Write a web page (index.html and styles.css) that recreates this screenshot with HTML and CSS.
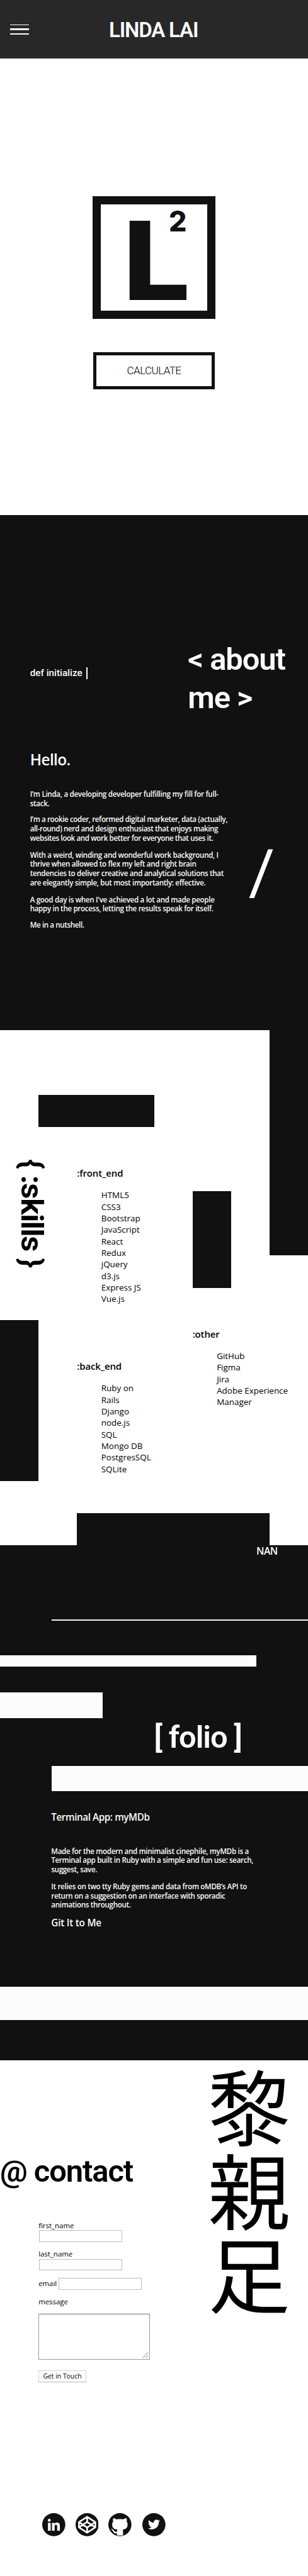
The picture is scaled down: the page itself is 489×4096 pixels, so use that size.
FILE: index.html
```
<!DOCTYPE html>
<html lang="en">
<head>
<meta charset="utf-8">
<title>Linda Lai</title>
<link rel="stylesheet" href="styles.css">
</head>
<body>
<div class="page">
<header class="topbar">
  <div class="burger"><i></i><i></i><i></i></div>
  <h1 class="brand">LINDA LAI</h1>
</header>

<main>
<section class="hero">
  <div class="logo"><span class="logo-l">L</span><span class="logo-2">2</span></div>
  <a class="calc">CALCULATE</a>
</section>

<section class="about">
  <div class="about-head">
    <p class="typed">def initialize<span class="cursor"></span></p>
    <h2 class="title">&lt; about<br>me &gt;</h2>
  </div>
  <div class="about-body">
    <div class="copy">
      <h3 class="hello">Hello.</h3>
      <p>I’m Linda, a developing developer fulfilling my fill for full-<br>stack.</p>
      <p class="near">I’m a rookie coder, reformed digital marketer, data (actually,<br>all-round) nerd and design enthusiast that enjoys making<br>websites look and work better for everyone that uses it.</p>
      <p>With a weird, winding and wonderful work background, I<br>thrive when allowed to flex my left and right brain<br>tendencies to deliver creative and analytical solutions that<br>are elegantly simple, but most importantly: effective.</p>
      <p>A good day is when I've achieved a lot and made people<br>happy in the process, letting the results speak for itself.</p>
      <p class="near">Me in a nutshell.</p>
    </div>
    <div class="slash">/</div>
  </div>
</section>

<section class="skills">
  <div class="block b-right"></div>
  <div class="block b-top"></div>
  <div class="block b-mid"></div>
  <div class="block b-left"></div>
  <div class="block b-foot"></div>
  <h2 class="title skills-title">{ :skills }</h2>
  <div class="group g-front">
    <h4>:front_end</h4>
    <ul><li>HTML5</li><li>CSS3</li><li>Bootstrap</li><li>JavaScript</li><li>React</li><li>Redux</li><li>jQuery</li><li>d3.js</li><li>Express JS</li><li>Vue.js</li></ul>
  </div>
  <div class="group g-other">
    <h4>:other</h4>
    <ul><li>GitHub</li><li>Figma</li><li>Jira</li><li>Adobe Experience<br>Manager</li></ul>
  </div>
  <div class="group g-back">
    <h4>:back_end</h4>
    <ul><li>Ruby on<br>Rails</li><li>Django</li><li>node.js</li><li>SQL</li><li>Mongo DB</li><li>PostgresSQL</li><li>SQLite</li></ul>
  </div>
</section>

<section class="folio">
  <div class="nan">NAN</div>
  <div class="bar bar-line"></div>
  <div class="bar bar-wide"></div>
  <div class="bar bar-short"></div>
  <h2 class="title folio-title">[ folio ]</h2>
  <div class="bar bar-right"></div>
  <article class="project copy">
    <h3>Terminal App: myMDb</h3>
    <p>Made for the modern and minimalist cinephile, myMDb is a<br>Terminal app built in Ruby with a simple and fun use: search,<br>suggest, save.</p>
    <p>It relies on two tty Ruby gems and data from oMDB’s API to<br>return on a suggestion on an interface with sporadic<br>animations throughout.</p>
    <a class="git">Git It to Me</a>
  </article>
  <div class="bar bar-full"></div>
</section>

<section class="contact">
  <div class="contact-main">
    <h2 class="title contact-title">@ contact</h2>
    <form class="form">
      <label class="field">first_name<input type="text"></label>
      <label class="field">last_name<input type="text"></label>
      <label class="field inline">email<input type="text"></label>
      <label class="field msg">message
        <span class="area"><svg viewBox="0 0 16 16"><path d="M1 15L15 1M9 15L15 9"/></svg></span>
      </label>
      <button type="button" class="send">Get in Touch</button>
    </form>
    <nav class="social">
      <svg viewBox="0 0 60 60"><circle cx="30" cy="30" r="30"/><g class="w"><circle cx="18.4" cy="18.7" r="3.8"/><path d="M15 25.3h7V46h-7zM25.3 25.3H32v2.8c1.200-2 3.500-3.400 6.400-3.400 5.600 0 7.500 3.700 7.500 9.100V46h-7V35c0-2.600-.5-4.600-3.200-4.600S32.300 32.600 32.300 35v11h-7z"/></g></svg>
      <svg viewBox="0 0 60 60"><circle cx="30" cy="30" r="30"/><path class="s" d="M30 9.500L51.300 23.500V37L30 51 8.700 37V23.500zM30 9.500V23M30 37.500V51M8.700 23.500L30 37.500 51.300 23.500M8.700 37L30 23 51.300 37"/></svg>
      <svg viewBox="0 0 60 60"><circle cx="30" cy="30" r="30"/><path class="w" d="M13 13c3 .2 6 1.700 8.300 3.400 5.600-1 12-1 17.600 0C41.200 14.700 44.200 13.200 47 13c1.300 3 1.300 6 .5 8.800C49.500 24 50 27 50 30c0 9-5.500 12.500-13 13 1 1.200 1.200 3 1.200 5v9.500q-8 1-15.700 0v-5.300C15 54 13.500 49.500 11.500 46.500 10.500 44.500 8 43.500 7 41.500c4-.5 6.500 1.500 8 4.500 1.500 2.800 4.500 3 7.500 2.300.1-2.300.3-4 1.200-5.300C15.500 42.500 10 39 10 30c0-3.200.8-6 2.700-8.200C11.800 19 11.800 16 13 13z"/></svg>
      <svg class="last" viewBox="0 0 60 60"><circle cx="30" cy="30" r="30"/><path class="w" transform="translate(14.700 14.200) scale(1.300)" d="M23.953 4.570a10 10 0 01-2.825.775 4.958 4.958 0 002.163-2.723c-.951.555-2.005.959-3.127 1.184a4.920 4.920 0 00-8.384 4.482C7.690 8.095 4.067 6.130 1.640 3.162a4.822 4.822 0 00-.666 2.475c0 1.710.870 3.213 2.188 4.096a4.904 4.904 0 01-2.228-.616v.060a4.923 4.923 0 003.946 4.827 4.996 4.996 0 01-2.212.085 4.936 4.936 0 004.604 3.417 9.867 9.867 0 01-6.102 2.105c-.390 0-.779-.023-1.170-.067a13.995 13.995 0 007.557 2.209c9.053 0 13.998-7.496 13.998-13.985 0-.210 0-.420-.015-.630A9.935 9.935 0 0024 4.590z"/></svg>
    </nav>
  </div>
  <div class="kanji" lang="ja"><span>黎</span><span>親</span><span>足</span></div>
</section>
</main>
</div>
</body>
</html>
```
FILE: styles.css
```
html, body { margin: 0; background: #fff; }
.page {
  width: 800px;
  zoom: 0.61125;
  color: #000;
  font-family: "Open Sans", "Noto Sans", sans-serif;
}
* { box-sizing: border-box; }
h1, h2, h3, h4, p, ul { margin: 0; padding: 0; }
ul { list-style: none; }

.title {
  font: 600 80px/100px Roboto, sans-serif;
  letter-spacing: -1.8px;
  white-space: nowrap;
}

/* Top bar */
.topbar {
  height: 152px;
  background: #282828;
  display: grid;
  grid-template-columns: 26px 50px 1fr;
  align-items: start;
}
.burger {
  grid-column: 2;
  display: flex;
  flex-direction: column;
  gap: 8px;
  padding-top: 64px;
}
.burger i { height: 4px; border-radius: 1px; background: #fff; }
.burger i:first-child { height: 2px; }
.brand {
  padding: 46px 0 0 207px;
  font: 600 54px/64px Roboto, sans-serif;
  letter-spacing: -1.9px;
  color: #fcfcfc;
}

/* Hero */
.hero {
  height: 1188px;
  padding-top: 358px;
  display: flex;
  flex-direction: column;
  align-items: center;
}
.logo {
  position: relative;
  width: 320px;
  height: 320px;
  border: 22px solid #111;
  color: #111;
  font-family: Inter, sans-serif;
}
.logo-l {
  position: absolute;
  left: 57.500px;
  top: 7px;
  font-size: 283px;
  line-height: 280px;
  font-weight: 800;
  transform: scaleX(1.096);
  transform-origin: 0 0;
}
.logo-2 {
  position: absolute;
  left: 177px;
  top: 6px;
  font-size: 73px;
  line-height: 80px;
  font-weight: 800;
}
.calc {
  margin-top: 86px;
  width: 315px;
  height: 96px;
  border: 8.500px solid #111;
  font: 300 28px/79px Roboto, sans-serif;
  letter-spacing: -1px;
  text-align: center;
}

/* About */
.about {
  height: 1340px;
  padding: 326px 0 0 78px;
  background: #111;
  color: #fcfcfc;
}
.about-head { display: grid; grid-template-columns: 410px 1fr; }
.typed {
  display: flex;
  gap: 11px;
  padding-top: 69px;
  font: 500 25px/32px Roboto, sans-serif;
}
.cursor { width: 3.500px; height: 32px; background: #fcfcfc; }
.about-body { display: grid; grid-template-columns: 568px 1fr; padding-top: 86px; }
.copy { white-space: nowrap; }
.copy p {
  margin-top: 20px;
  font-size: 19px;
  line-height: 24px;
  font-weight: 600;
  letter-spacing: -0.540px;
}
.copy p.near { margin-top: 18px; letter-spacing: -0.640px; }
.copy .hello { font-size: 40px; line-height: 50px; font-weight: 600; letter-spacing: -1px; }
.copy .hello + p { margin-top: 53px; letter-spacing: -0.480px; }
.slash { padding-top: 237px; font: 400 165px/165px Roboto, sans-serif; }

/* Skills */
.skills {
  height: 1340px;
  display: grid;
  grid-template-columns: repeat(8, 100px);
  grid-template-rows: repeat(16, 83.750px);
}
.block { background: #111; }
.b-right { grid-area: 1 / 8 / 8 / 9; }
.b-top { grid-area: 3 / 2 / 4 / 5; }
.b-mid { grid-area: 6 / 6 / 9 / 7; }
.b-left { grid-area: 10 / 1 / 15 / 2; }
.b-foot { grid-area: 16 / 3 / 17 / 8; }
.skills-title {
  grid-area: 5 / 1 / 9 / 2;
  margin-left: 32px;
  width: 100px;
  writing-mode: vertical-rl;
  font-weight: 700;
  letter-spacing: -2px;
}
.group { padding-top: 22px; white-space: nowrap; }
.group h4 { font-size: 24.500px; line-height: 30px; font-weight: 600; letter-spacing: -0.200px; }
.group ul { padding: 27px 0 0 63px; font-size: 22px; line-height: 30px; }
.g-front { grid-area: 5 / 3 / 10 / 6; }
.g-other { grid-area: 10 / 6 / 14 / 9; }
.g-back { grid-area: 11 / 3 / 15 / 6; }

/* Folio */
.folio {
  height: 1340px;
  background: #111;
  color: #fcfcfc;
  display: flex;
  flex-direction: column;
  align-items: flex-start;
}
.nan { margin-left: 666px; font-size: 26px; line-height: 32px; font-weight: 600; letter-spacing: -1px; }
.bar { background: #fcfcfc; }
.bar-line { margin-top: 160px; width: 666px; height: 4px; align-self: flex-end; background: #f4f5f6; }
.bar-wide { margin-top: 90px; width: 666px; height: 30px; }
.bar-short { margin-top: 66px; width: 266px; height: 68px; }
.folio-title { margin: 3px 0 0 400px; line-height: 94px; letter-spacing: -1.800px; }
.bar-right { margin-top: 27px; width: 666px; height: 66px; align-self: flex-end; }
.project { padding: 50px 0 0 133px; }
.project h3 { font-size: 25px; line-height: 34px; font-weight: 600; letter-spacing: -0.700px; }
.project h3 + p { margin-top: 60.500px; }
.git { display: block; margin-top: 17px; font-size: 25px; line-height: 34px; font-weight: 600; letter-spacing: -0.350px; }
.bar-full { margin-top: 149px; width: 800px; height: 86px; }

/* Contact */
.contact { height: 1339px; display: grid; grid-template-columns: 540px 1fr; }
.contact-main { padding-top: 238px; }
.form { margin: 80px 0 0 100px; font-size: 18.700px; }
.field { display: block; line-height: 24px; margin-bottom: 20px; }
.field input {
  display: block;
  width: 216px;
  height: 30px;
  margin: 0 0 0 1px;
  padding: 0;
  border: 1px solid #bdbdbd;
  background: #fff;
}
.field.inline { display: flex; align-items: center; gap: 4px; margin-bottom: 21px; }
.field.msg { margin-bottom: 28px; }
.area {
  display: flex;
  justify-content: flex-end;
  align-items: flex-end;
  width: 290px;
  height: 120px;
  margin-top: 18px;
  padding: 2px;
  border: 2px solid #999;
  border-top-color: #707070;
}
.area svg { width: 16px; height: 16px; fill: none; stroke: #555; stroke-width: 1.300; }
.send {
  display: block;
  width: 124px;
  height: 30px;
  padding: 0;
  border: 2px solid #d2d2d2;
  border-bottom-color: #b8b8b8;
  background: #fff;
  color: #000;
  font: 400 17px/24px "Open Sans", sans-serif;
}
.social { display: flex; gap: 26px; margin: 341px 0 0 110px; }
.social svg { width: 60px; height: 60px; fill: #111; }
.social .last { margin-left: 2px; }
.social .w { fill: #fff; }
.social .s { fill: none; stroke: #fff; stroke-width: 4.300; stroke-linejoin: round; }
.kanji {
  display: flex;
  flex-direction: column;
  padding-top: 4px;
  font: 400 214px/218px "Noto Sans CJK JP", sans-serif;
}
```
